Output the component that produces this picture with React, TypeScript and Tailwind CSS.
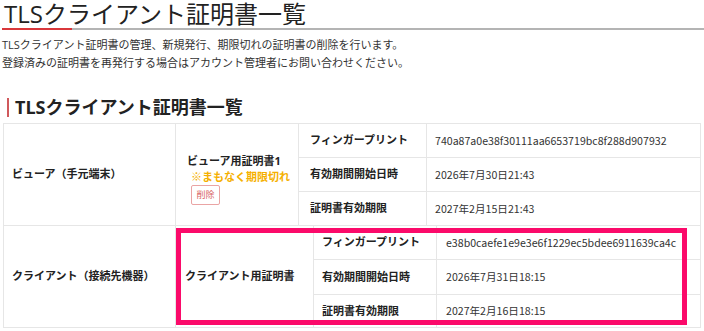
import React from "react";

const viewerRows = [
  { label: "フィンガープリント", value: "740a87a0e38f30111aa6653719bc8f288d907932" },
  { label: "有効期間開始日時", value: "2026年7月30日21:43" },
  { label: "証明書有効期限", value: "2027年2月15日21:43" },
];

const clientRows = [
  { label: "フィンガープリント", value: "e38b0caefe1e9e3e6f1229ec5bdee6911639ca4c" },
  { label: "有効期間開始日時", value: "2026年7月31日18:15" },
  { label: "証明書有効期限", value: "2027年2月16日18:15" },
];

export default function App() {
  return (
    <div className="w-[704px] h-[331px] overflow-hidden bg-white font-['Open_Sans','Noto_Sans_CJK_JP',sans-serif] text-[#222]">
      {/* Page title */}
      <h1 className="pl-[4px] text-[24px] leading-[28px] font-normal">TLSクライアント証明書一覧</h1>
      <div className="flex pl-[2px]">
        <div className="w-[70px] h-[2px] bg-[#d9373b]" />
        <div className="flex-1 h-[2px] bg-[#b4b4b4]" />
      </div>

      <div className="mt-[6px] pl-[2px] text-[11px] leading-[18px] text-[#333]">
        <p>TLSクライアント証明書の管理、新規発行、期限切れの証明書の削除を行います。</p>
        <p>登録済みの証明書を再発行する場合はアカウント管理者にお問い合わせください。</p>
      </div>

      {/* Section heading */}
      <h2 className="mt-[26px] ml-[7px] pl-[6px] border-l-2 border-[#d0595c] text-[18px] leading-[19px] font-bold">
        TLSクライアント証明書一覧
      </h2>

      {/* Certificate table */}
      <div className="mt-[6px] mx-[3px] p-px bg-[#e6e6e6] flex flex-col gap-px text-[11px]">
        <div className="grid grid-cols-[171px_122px_127px_1fr] grid-rows-[33px_33px_33px] gap-px">
          <div className="row-span-3 bg-white flex items-center pl-2 font-bold">ビューア（手元端末）</div>
          <div className="row-span-3 bg-white flex flex-col justify-center pl-[11px] pt-[8px] font-bold">
            <span className="leading-[16px]">ビューア用証明書1</span>
            <span className="leading-[16px] pl-[4px] text-[#f5b000]">※まもなく期限切れ</span>
            <span className="ml-[4px] w-[29px] h-[20px] flex items-center justify-center border border-[#eaa4a4] rounded-[2px] text-[9px] font-normal text-[#d86565]">
              削除
            </span>
          </div>
          {viewerRows.map((row) => (
            <React.Fragment key={row.label}>
              <div className="bg-white flex items-center pl-[11px] font-bold">{row.label}</div>
              <div className="bg-white flex items-center pl-2 text-[#333] text-[10.6px] font-['Noto_Sans_CJK_JP',sans-serif]">{row.value}</div>
            </React.Fragment>
          ))}
        </div>

        <div className="relative">
          <div className="grid grid-cols-[171px_137px_122px_1fr] grid-rows-[33px_34px_32px] gap-px">
            <div className="row-span-3 bg-white flex items-center pl-2 font-bold">クライアント（接続先機器）</div>
            <div className="row-span-3 bg-white flex items-center pl-[9px] font-bold">クライアント用証明書</div>
            {clientRows.map((row) => (
              <React.Fragment key={row.label}>
                <div className="bg-white flex items-center pl-2 font-bold">{row.label}</div>
                <div className="bg-white flex items-center pl-[9px] text-[#333] text-[10.6px] font-['Noto_Sans_CJK_JP',sans-serif]">{row.value}</div>
              </React.Fragment>
            ))}
          </div>
          {/* highlight annotation */}
          <div className="absolute left-[172px] top-[2px] w-[511px] h-[97px] border-[5px] border-[#fb0a6a]" />
        </div>
      </div>
    </div>
  );
}
